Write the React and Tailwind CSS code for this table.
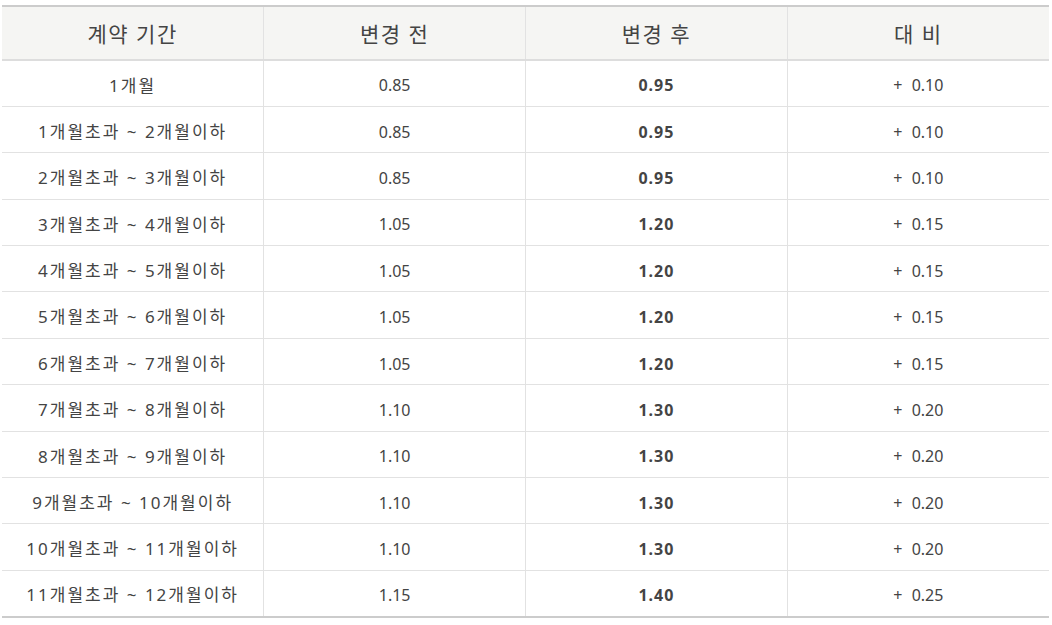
import React from 'react';

const rows = [
    ['1개월', '0.85', '0.95', '0.10'],
    ['1개월초과 ~ 2개월이하', '0.85', '0.95', '0.10'],
    ['2개월초과 ~ 3개월이하', '0.85', '0.95', '0.10'],
    ['3개월초과 ~ 4개월이하', '1.05', '1.20', '0.15'],
    ['4개월초과 ~ 5개월이하', '1.05', '1.20', '0.15'],
    ['5개월초과 ~ 6개월이하', '1.05', '1.20', '0.15'],
    ['6개월초과 ~ 7개월이하', '1.05', '1.20', '0.15'],
    ['7개월초과 ~ 8개월이하', '1.10', '1.30', '0.20'],
    ['8개월초과 ~ 9개월이하', '1.10', '1.30', '0.20'],
    ['9개월초과 ~ 10개월이하', '1.10', '1.30', '0.20'],
    ['10개월초과 ~ 11개월이하', '1.10', '1.30', '0.20'],
    ['11개월초과 ~ 12개월이하', '1.15', '1.40', '0.25'],
];

const App = () => {
    return (
        <div className="bg-white w-[1052px] h-[625px] pt-[5px] pl-[2px] text-[#444]" style={{ fontFamily: '"Noto Sans", "Noto Sans CJK KR", sans-serif' }}>
            <table className="w-[1047px] border-collapse table-fixed">
                <thead>
                    <tr className="h-[54px] bg-[#f5f5f3] border-t-2 border-b-2 border-t-[#cccccc] border-b-[#dddddd]">
                        {['계약 기간', '변경 전', '변경 후', '대 비'].map((h, i) => (
                            <th key={h} className={`font-normal text-[21px] tracking-[1.5px] text-[#444] pt-[4px] ${i > 0 ? 'border-l border-[#e2e2e2]' : ''}`}>{h}</th>
                        ))}
                    </tr>
                </thead>
                <tbody>
                    {rows.map((r, idx) => (
                        <tr key={idx} className={`h-[46.4px] ${idx === rows.length - 1 ? 'border-b-2 border-b-[#cccccc]' : 'border-b border-b-[#e2e2e2]'}`}>
                            <td className="text-center text-[17px] tracking-[2px] pt-[4px]">{r[0]}</td>
                            <td className="text-center text-[16px] pt-[4px] border-l border-[#e2e2e2]">{r[1]}</td>
                            <td className="text-center text-[16px] font-bold tracking-[1px] pt-[4px] border-l border-[#e2e2e2]">{r[2]}</td>
                            <td className="text-center text-[16px] pt-[4px] border-l border-[#e2e2e2]">
                                + <span className="ml-[5px]">{r[3]}</span>
                            </td>
                        </tr>
                    ))}
                </tbody>
            </table>
        </div>
    );
};

export default App;
